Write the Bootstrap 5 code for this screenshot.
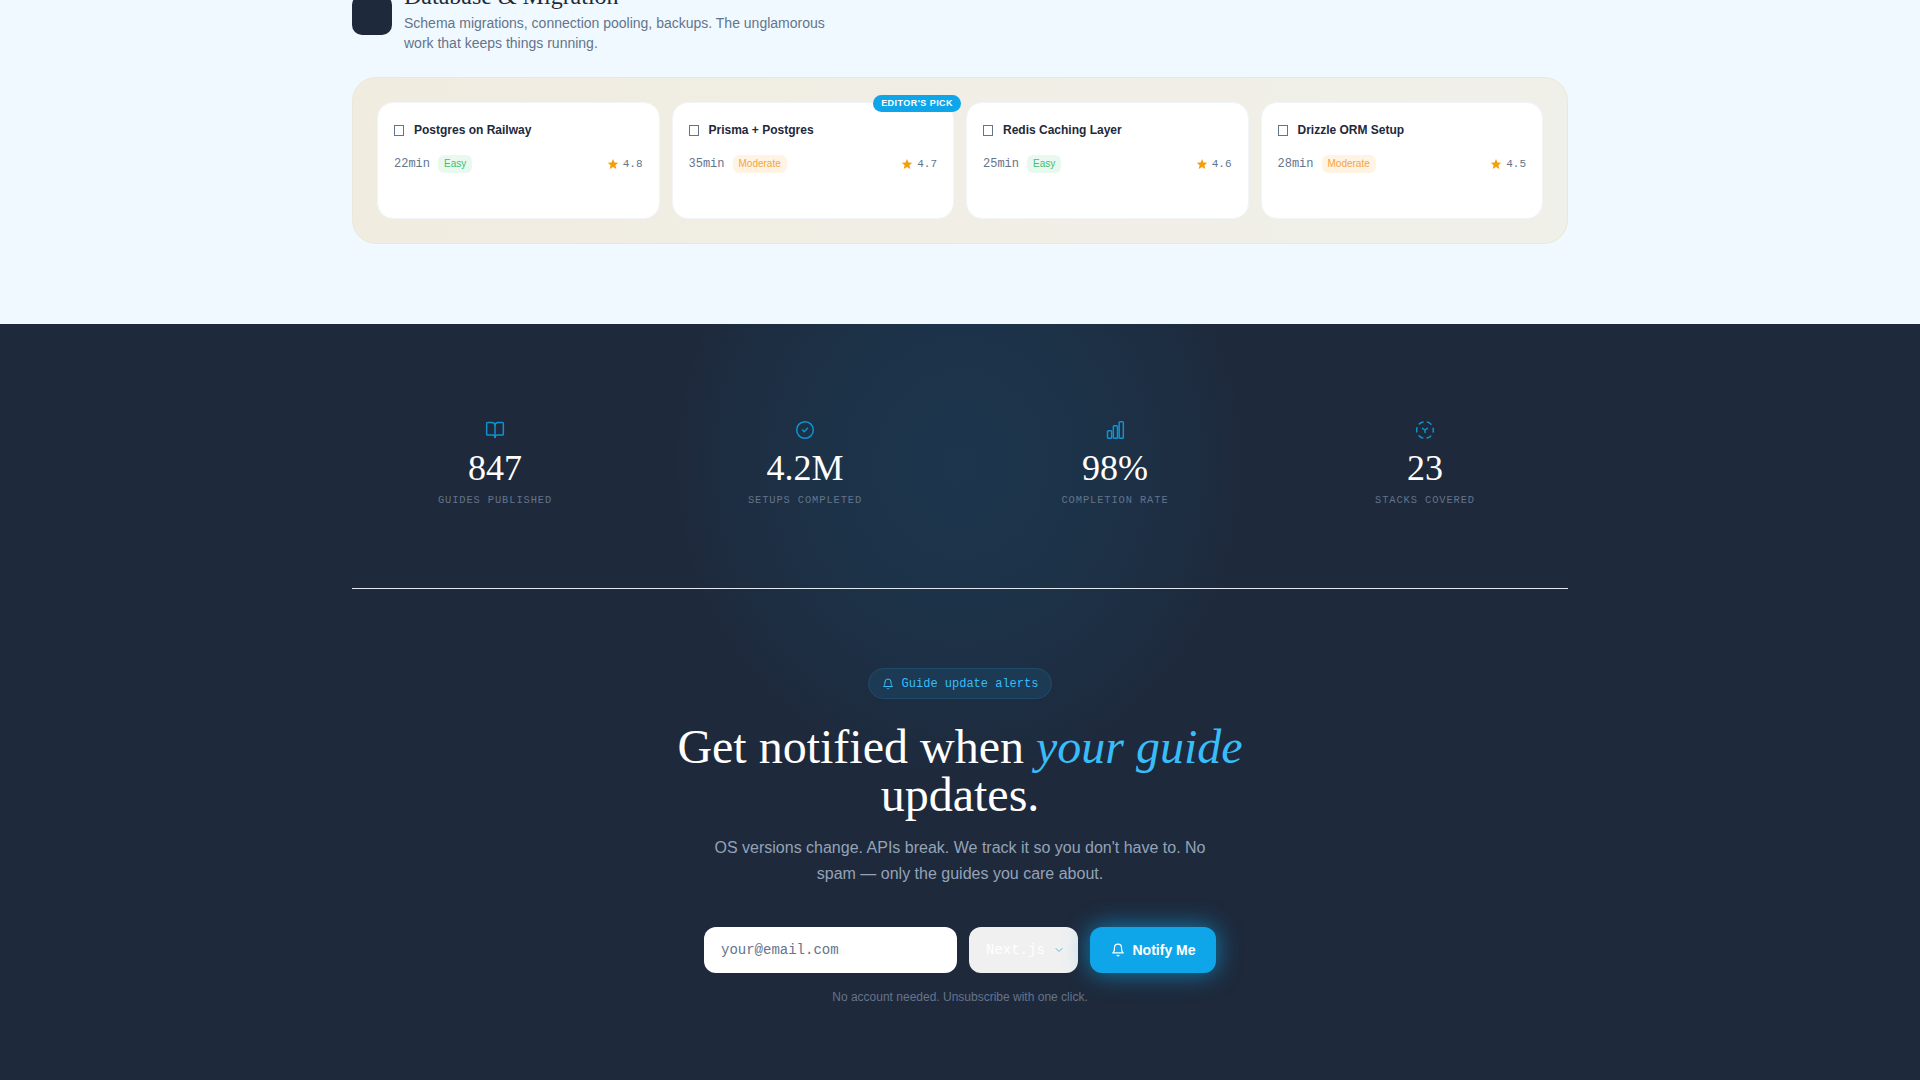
<!DOCTYPE html>
<html lang="en">

<head>
    <meta charset="UTF-8">
    <meta name="viewport" content="width=device-width, initial-scale=1.0">
    <title>Guides</title>
    <link href="https://cdn.jsdelivr.net/npm/bootstrap@5.3.3/dist/css/bootstrap.min.css" rel="stylesheet">
    <style>
        html, body { height: 1080px; overflow: hidden; }
        body { background: #f0f9ff; font-family: "Liberation Sans", Arial, sans-serif; color: #1e293b; }
        .page-wrap { width: 1216px; }

        /* light section, top is cut off by the scroll position */
        .light-part { height: 329px; margin-top: -5px; }
        .cat-head { gap: 12px; }
        .cat-icon { width: 40px; height: 40px; background: #1e293b; border-radius: 10px; flex: none; }
        .cat-title { font-family: "Liberation Serif", serif; font-size: 24px; line-height: 1; font-weight: 400; margin: -11px 0 5px; }
        .cat-desc { font-size: 14px; line-height: 20px; color: #64748b; width: 448px; margin: 0; }
        .guide-panel { background: linear-gradient(to right, #f1ece0, #f0f0ea); border: 1px solid #ece8d8; border-radius: 24px; padding: 24px; margin-top: 24px; gap: 12px; }
        .guide-item { background: #fff; border: 1px solid #f1f5f9; border-radius: 16px; height: 117px; padding: 17px 16px 16px; position: relative; }
        .guide-title { font-size: 12px; font-weight: 700; line-height: 20px; color: #1e293b; gap: 10px; margin-bottom: 15px; }
        .guide-check { width: 10px; height: 11px; border: 1px solid #64748b; flex: none; }
        .guide-time { font-family: "Liberation Mono", monospace; font-size: 12px; color: #64748b; }
        .guide-level { font-size: 10px; line-height: 14px; padding: 2px 6px; border-radius: 6px; }
        .lvl-easy { background: #e9f9ef; color: #3fbf6f; }
        .lvl-mod { background: #fff3e4; color: #f5a33b; }
        .guide-rate { font-family: "Liberation Mono", monospace; font-size: 11px; color: #64748b; }
        .pick-tag { position: absolute; top: -8px; right: -8px; background: #0ea5e9; color: #fff; font-size: 9px; font-weight: 700; letter-spacing: .45px; line-height: 17px; padding: 0 8px; border-radius: 9px; }

        /* dark section */
        .dark-part { background: #1e293b; height: 760px; position: relative; overflow: hidden; }
        .dark-glow { position: absolute; top: 0; left: 660px; width: 600px; height: 470px; background: radial-gradient(ellipse 300px 330px at 50% 140px, rgba(14, 165, 233, .1), rgba(14, 165, 233, .07) 50%, transparent 100%); }
        .stat-row { padding-top: 96px; height: 288px; position: relative; }
        .stat-icon { display: block; margin: 0 auto 8px; color: #0ea5e9; opacity: .85; }
        .stat-num { font-family: "Liberation Serif", serif; font-size: 36px; line-height: 40px; color: #fff; }
        .stat-label { font-family: "Liberation Mono", monospace; font-size: 10.4px; letter-spacing: .9px; line-height: 15px; color: #64748b; margin-top: 5px; }
        .stat-line { height: 1px; background: #e2e8f0; position: relative; }
        .alert-tag { border: 1px solid #1f4b6b; background: #1c3a54; color: #38bdf8; font-family: "Liberation Mono", monospace; font-size: 12px; height: 31px; padding: 0 13px; border-radius: 16px; margin-top: 79px; }
        .notify-title { font-family: "Liberation Serif", serif; font-size: 48px; line-height: 48px; font-weight: 400; color: #fff; margin: 24px auto 16px; width: 640px; }
        .notify-title em { color: #38bdf8; }
        .notify-desc { font-size: 16px; line-height: 26px; color: #94a3b8; width: 512px; margin: 0 auto 40px; }
        .notify-form { gap: 12px; }
        .email-box { width: 253px; height: 46px; background: #fff; border: 0; border-radius: 12px; font-family: "Liberation Mono", monospace; font-size: 14px; padding: 0 17px; }
        .email-box::placeholder { color: #64748b; opacity: 1; }
        .stack-box { width: 109px; height: 46px; background: #f0f0f0; border-radius: 12px; font-family: "Liberation Mono", monospace; font-size: 14px; color: #fff; padding: 0 13px 0 17px; }
        .notify-btn { width: 126px; height: 46px; background: #0ea5e9; color: #fff; border: 0; border-radius: 12px; font-size: 14px; font-weight: 700; box-shadow: 0 0 24px rgba(14, 165, 233, .7); }
        .notify-btn:hover { background: #0ea5e9; color: #fff; }
        .fine-print { font-size: 12px; line-height: 16px; color: #64748b; margin-top: 16px; }
    </style>
</head>

<body>
    <div class="light-part">
        <div class="page-wrap mx-auto">
            <div class="cat-head d-flex">
                <div class="cat-icon"></div>
                <div>
                    <h3 class="cat-title">Database &amp; Migration</h3>
                    <p class="cat-desc">Schema migrations, connection pooling, backups. The unglamorous work that keeps things running.</p>
                </div>
            </div>
            <div class="guide-panel d-flex">
                <div class="guide-item w-25">
                    <div class="d-flex align-items-center guide-title"><span class="guide-check"></span>Postgres on Railway</div>
                    <div class="d-flex align-items-center">
                        <span class="guide-time me-2">22min</span><span class="guide-level lvl-easy">Easy</span>
                        <span class="guide-rate ms-auto d-flex align-items-center gap-1"><svg width="12" height="12" viewBox="0 0 24 24" fill="#f59e0b"><path d="M12 2l3 7 7.500.7-5.700 4.900 1.800 7.400-6.600-4-6.600 4 1.800-7.400L1.500 9.700 9 9z"/></svg>4.8</span>
                    </div>
                </div>
                <div class="guide-item w-25">
                    <span class="pick-tag">EDITOR'S PICK</span>
                    <div class="d-flex align-items-center guide-title"><span class="guide-check"></span>Prisma + Postgres</div>
                    <div class="d-flex align-items-center">
                        <span class="guide-time me-2">35min</span><span class="guide-level lvl-mod">Moderate</span>
                        <span class="guide-rate ms-auto d-flex align-items-center gap-1"><svg width="12" height="12" viewBox="0 0 24 24" fill="#f59e0b"><path d="M12 2l3 7 7.500.7-5.700 4.900 1.800 7.400-6.600-4-6.600 4 1.800-7.400L1.500 9.700 9 9z"/></svg>4.7</span>
                    </div>
                </div>
                <div class="guide-item w-25">
                    <div class="d-flex align-items-center guide-title"><span class="guide-check"></span>Redis Caching Layer</div>
                    <div class="d-flex align-items-center">
                        <span class="guide-time me-2">25min</span><span class="guide-level lvl-easy">Easy</span>
                        <span class="guide-rate ms-auto d-flex align-items-center gap-1"><svg width="12" height="12" viewBox="0 0 24 24" fill="#f59e0b"><path d="M12 2l3 7 7.500.7-5.700 4.900 1.800 7.400-6.600-4-6.600 4 1.800-7.400L1.500 9.700 9 9z"/></svg>4.6</span>
                    </div>
                </div>
                <div class="guide-item w-25">
                    <div class="d-flex align-items-center guide-title"><span class="guide-check"></span>Drizzle ORM Setup</div>
                    <div class="d-flex align-items-center">
                        <span class="guide-time me-2">28min</span><span class="guide-level lvl-mod">Moderate</span>
                        <span class="guide-rate ms-auto d-flex align-items-center gap-1"><svg width="12" height="12" viewBox="0 0 24 24" fill="#f59e0b"><path d="M12 2l3 7 7.500.7-5.700 4.900 1.800 7.400-6.600-4-6.600 4 1.800-7.400L1.500 9.700 9 9z"/></svg>4.5</span>
                    </div>
                </div>
            </div>
        </div>
    </div>

    <div class="dark-part">
        <div class="dark-glow"></div>
        <div class="page-wrap mx-auto">
            <div class="row g-4 stat-row text-center">
                <div class="col-3">
                    <svg class="stat-icon" width="20" height="20" viewBox="0 0 24 24" fill="none" stroke="currentColor" stroke-width="1.800" stroke-linecap="round" stroke-linejoin="round"><path d="M12 7v14"/><path d="M3 18a1 1 0 0 1-1-1V4a1 1 0 0 1 1-1h5a4 4 0 0 1 4 4 4 4 0 0 1 4-4h5a1 1 0 0 1 1 1v13a1 1 0 0 1-1 1h-6a3 3 0 0 0-3 3 3 3 0 0 0-3-3z"/></svg>
                    <div class="stat-num">847</div>
                    <div class="stat-label">GUIDES PUBLISHED</div>
                </div>
                <div class="col-3">
                    <svg class="stat-icon" width="20" height="20" viewBox="0 0 24 24" fill="none" stroke="currentColor" stroke-width="1.800" stroke-linecap="round" stroke-linejoin="round"><circle cx="12" cy="12" r="10"/><path d="m9 12 2 2 4-4"/></svg>
                    <div class="stat-num">4.2M</div>
                    <div class="stat-label">SETUPS COMPLETED</div>
                </div>
                <div class="col-3">
                    <svg class="stat-icon" width="20" height="20" viewBox="0 0 24 24" fill="none" stroke="currentColor" stroke-width="1.800" stroke-linecap="round" stroke-linejoin="round"><rect x="3" y="13" width="5" height="9" rx="1"/><rect x="10" y="7" width="5" height="15" rx="1"/><rect x="17" y="2" width="5" height="20" rx="1"/></svg>
                    <div class="stat-num">98%</div>
                    <div class="stat-label">COMPLETION RATE</div>
                </div>
                <div class="col-3">
                    <svg class="stat-icon" width="20" height="20" viewBox="0 0 24 24" fill="none" stroke="currentColor" stroke-width="1.800" stroke-linecap="round" stroke-linejoin="round"><circle cx="12" cy="12" r="10" stroke-dasharray="5 5.470" stroke-dashoffset="2.500"/><path d="M9 10l3 2 3-2M12 12v3"/></svg>
                    <div class="stat-num">23</div>
                    <div class="stat-label">STACKS COVERED</div>
                </div>
            </div>
            <div class="stat-line"></div>
            <div class="text-center position-relative">
                <div class="alert-tag d-inline-flex align-items-center gap-2">
                    <svg width="12" height="12" viewBox="0 0 24 24" fill="none" stroke="currentColor" stroke-width="2" stroke-linecap="round" stroke-linejoin="round"><path d="M10.300 21a1.940 1.940 0 0 0 3.400 0"/><path d="M6 8a6 6 0 0 1 12 0c0 7 3 9 3 9H3s3-2 3-9"/></svg>
                    Guide update alerts
                </div>
                <h2 class="notify-title">Get notified when <em>your guide</em> updates.</h2>
                <p class="notify-desc">OS versions change. APIs break. We track it so you don't have to. No spam — only the guides you care about.</p>
                <div class="notify-form d-flex justify-content-center">
                    <input class="email-box" type="text" placeholder="your@email.com">
                    <div class="stack-box d-flex align-items-center justify-content-between">
                        <span>Next.js</span>
                        <svg width="12" height="12" viewBox="0 0 24 24" fill="none" stroke="#5fb4e0" stroke-width="2" stroke-linecap="round" stroke-linejoin="round"><path d="m6 9 6 6 6-6"/></svg>
                    </div>
                    <button class="btn notify-btn d-flex align-items-center justify-content-center gap-2" type="button">
                        <svg width="14" height="14" viewBox="0 0 24 24" fill="none" stroke="currentColor" stroke-width="2" stroke-linecap="round" stroke-linejoin="round"><path d="M10.300 21a1.940 1.940 0 0 0 3.400 0"/><path d="M6 8a6 6 0 0 1 12 0c0 7 3 9 3 9H3s3-2 3-9"/></svg>
                        Notify Me
                    </button>
                </div>
                <div class="fine-print">No account needed. Unsubscribe with one click.</div>
            </div>
        </div>
    </div>

    <script src="https://cdn.jsdelivr.net/npm/bootstrap@5.3.3/dist/js/bootstrap.bundle.min.js"></script>
</body>

</html>
